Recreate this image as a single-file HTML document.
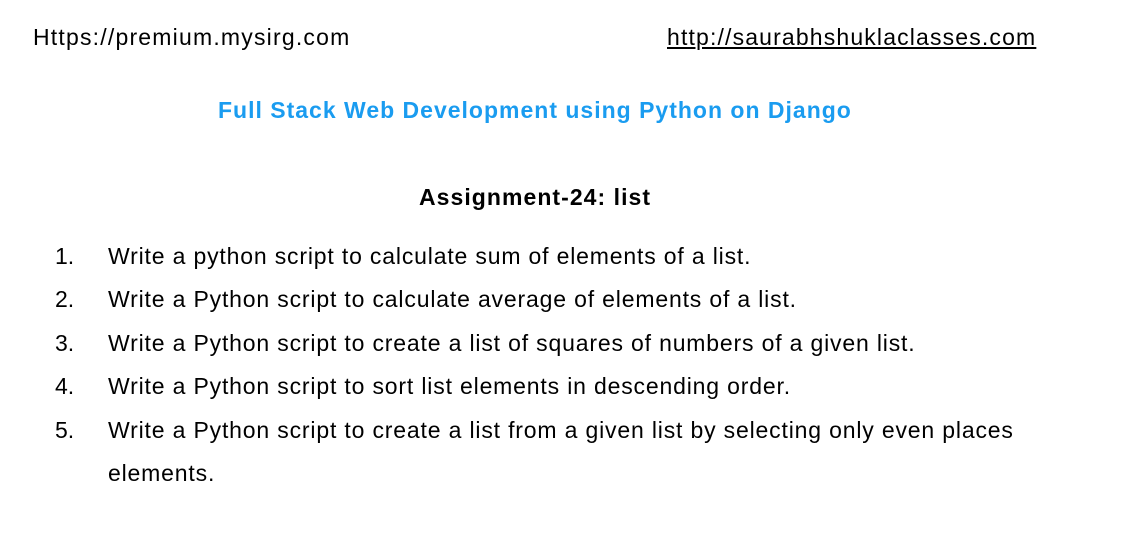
<!DOCTYPE html>
<html><head><style>
body{margin:0;width:1133px;height:547px;background:#fff;font-family:"Liberation Sans",Arial,sans-serif;font-size:23px;color:#000;position:relative;overflow:hidden}
div{position:absolute;line-height:26px;white-space:nowrap}
.b{font-weight:bold}
.n{left:55px}
.t{left:108px;letter-spacing:0.83px}
</style></head><body>
<div style="left:33px;top:24px;letter-spacing:1.2px">Https://premium.mysirg.com</div>
<div style="left:667px;top:24px;text-decoration:underline;letter-spacing:1.15px">http://saurabhshuklaclasses.com</div>
<div class="b" style="left:218px;top:97px;color:#1a9cf0;letter-spacing:1px">Full Stack Web Development using Python on Django</div>
<div class="b" style="left:419px;top:184px;letter-spacing:1.05px">Assignment-24: list</div>
<div class="n" style="top:243px">1.</div><div class="t" style="top:243px">Write a python script to calculate sum of elements of a list.</div>
<div class="n" style="top:286px">2.</div><div class="t" style="top:286px">Write a Python script to calculate average of elements of a list.</div>
<div class="n" style="top:330px">3.</div><div class="t" style="top:330px">Write a Python script to create a list of squares of numbers of a given list.</div>
<div class="n" style="top:373px">4.</div><div class="t" style="top:373px">Write a Python script to sort list elements in descending order.</div>
<div class="n" style="top:417px">5.</div><div class="t" style="top:417px">Write a Python script to create a list from a given list by selecting only even places</div>
<div class="t" style="top:460px">elements.</div>
</body></html>
